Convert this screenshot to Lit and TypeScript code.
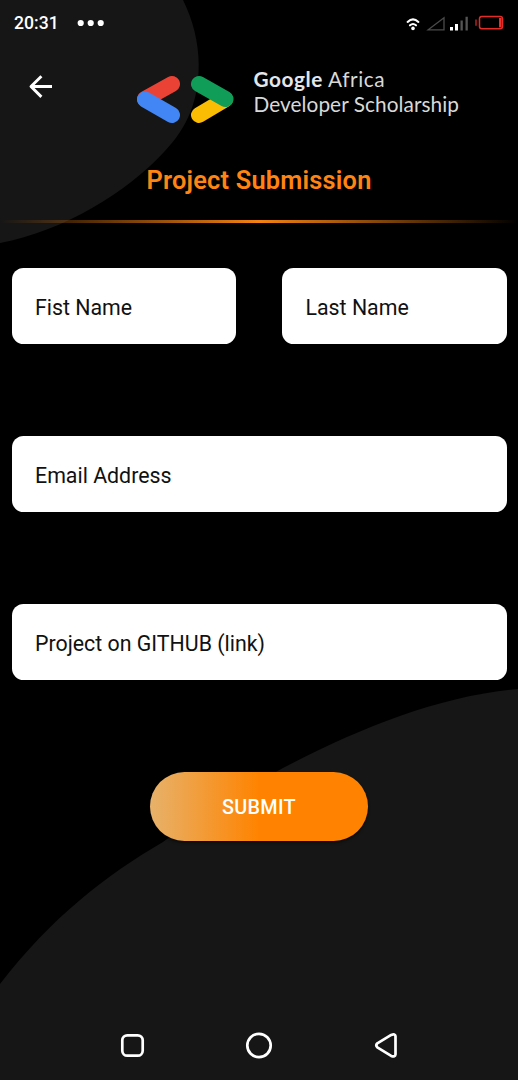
import { LitElement, html, css } from "lit";
import { customElement, property } from "lit/decorators.js";

@customElement("page-backdrop")
class PageBackdrop extends LitElement {
  static styles = css`
    :host { display: block; }
    svg { display: block; width: 100%; height: 100%; }
    path { fill: #161616; }
  `;
  render() {
    return html`<svg viewBox="0 0 518 1080" preserveAspectRatio="none" aria-hidden="true">
      <path d="M0 0H183C193 20 198.700 43 198.700 65C198.700 100 188 127 164 152C127 192 64 231 0 243Z" />
      <path d="M0 984C52 917 105 876 163 842C203 813 242 790 283 768C362 727 440 696 518 689V1080H0Z" />
    </svg>`;
  }
}

@customElement("status-bar")
class StatusBar extends LitElement {
  static styles = css`
    :host { display: flex; align-items: center; height: 46px; padding: 0 14px 0 14px; color: #fff; }
    .time { width: 44px; font-size: 17.600px; font-weight: 500; line-height: 47px; }
    .dots { margin-left: 19px; }
    .system { margin-left: auto; }
    svg { display: block; }
  `;
  render() {
    return html`
      <span class="time">20:31</span>
      <svg class="dots" width="28" height="8" viewBox="0 0 28 8" fill="#fff">
        <circle cx="3.700" cy="4" r="3.100" /><circle cx="13.700" cy="4" r="3.100" /><circle cx="23.700" cy="4" r="3.100" />
      </svg>
      <svg class="system" width="99" height="18" viewBox="0 0 99 18" fill="none">
        <g stroke="#fff" stroke-width="2.100" stroke-linecap="round">
          <path d="M2.600 7.900Q8 2.800 13.400 7.900M5 11.300Q8 8.700 11 11.300" />
        </g>
        <circle cx="8" cy="14.400" r="1.800" fill="#fff" />
        <path d="M23.200 15.800L39 3.800V15.800Z" stroke="#4b4b4b" stroke-width="1.300" />
        <path d="M45 13H48V16.500H45ZM50 10H53V16.500H50Z" fill="#fff" />
        <path d="M55.500 6.500H57.800V16.500H55.500ZM60.500 2.800H62.800V16.500H60.500Z" fill="#555" />
        <rect x="74.500" y="2.600" width="23" height="12.200" rx="2.200" stroke="#e32c26" stroke-width="1.500" />
        <path d="M71 5.500V11.800" stroke="#b22520" stroke-width="1.500" />
        <path d="M95.300 4V13.400" stroke="#f0342d" stroke-width="2.500" />
      </svg>
    `;
  }
}

@customElement("program-logo")
class ProgramLogo extends LitElement {
  static styles = css`
    :host { display: flex; align-items: flex-start; }
    svg { display: block; flex: none; margin-top: 8px; }
    .name { margin-left: 19.500px; font-family: Lato, "Open Sans", sans-serif; font-size: 20.800px; line-height: 25px; color: #d9d9d9; white-space: nowrap; }
    .line { display: block; }
    .first { letter-spacing: 0.550px; margin-top: -1px; }
    .second { letter-spacing: 0.060px; }
    b { font-weight: 700; color: #e6e6e6; }
  `;
  render() {
    return html`
      <svg width="98" height="49" viewBox="0 0 98 49" fill="none" stroke-width="16" stroke-linecap="round">
        <path d="M9 24L36 9" stroke="#ea4335" />
        <path d="M9 24.500L36 40" stroke="#4285f4" />
        <path d="M63 40L89 24.500" stroke="#fbbc04" />
        <path d="M63 9L89.500 24" stroke="#0f9d58" />
      </svg>
      <span class="name">
        <span class="line first"><b>Google</b> Africa</span>
        <span class="line second">Developer Scholarship</span>
      </span>
    `;
  }
}

@customElement("text-field")
class TextField extends LitElement {
  @property() label = "";
  static styles = css`
    :host { display: block; min-width: 0; }
    input {
      display: block; box-sizing: border-box; width: 100%; height: 76px;
      margin: 0; padding: 2px 23.500px 0; border: 0; border-radius: 11.500px;
      background: #fff; color: #111; font: 400 21.350px Roboto, sans-serif; outline: none;
    }
    input::placeholder { color: #111; opacity: 1; }
  `;
  render() {
    return html`<input placeholder=${this.label} aria-label=${this.label} />`;
  }
}

@customElement("nav-bar")
class NavBar extends LitElement {
  static styles = css`
    :host { display: flex; justify-content: space-between; padding: 0 119px 0 119px; height: 28px; }
    svg { display: block; }
  `;
  render() {
    return html`
      <svg width="28" height="28" viewBox="0 0 28 28" fill="none" stroke="#fff" stroke-width="2.700">
        <rect x="3.300" y="3.300" width="20.400" height="20.400" rx="5" />
      </svg>
      <svg width="28" height="28" viewBox="0 0 28 28" fill="none" stroke="#fff" stroke-width="2.700">
        <circle cx="14" cy="13.500" r="11.700" />
      </svg>
      <svg width="28" height="28" viewBox="0 0 28 28" fill="none" stroke="#fff" stroke-width="2.700" stroke-linejoin="round">
        <path d="M6.300 11.300L20.200 2.900Q24.200 1.300 24.500 4.200V22.400Q24.200 25.400 20.200 23.900L6.300 15.400Q4.300 13.300 6.300 11.300Z" />
      </svg>
    `;
  }
}

@customElement("app-root")
class AppRoot extends LitElement {
  static styles = css`
    :host {
      display: flex; flex-direction: column; position: relative; box-sizing: border-box;
      width: 518px; height: 1080px; overflow: hidden; background: #000;
      font-family: Roboto, sans-serif;
    }
    .backdrop { position: absolute; inset: 0; }
    .layer { position: relative; }
    header { display: flex; align-items: flex-start; height: 100px; padding: 21px 0 0 28px; box-sizing: border-box; }
    .back { display: block; margin: 7px 0 0; padding: 0; border: 0; background: none; width: 26px; height: 26px; }
    .back svg { display: block; }
    .logo { margin-left: 82px; }
    h1 { margin: 18px 0 0; height: 33px; line-height: 32px; text-align: center; color: #ff8412; font-size: 25.400px; font-weight: 600; letter-spacing: 0.200px; }
    .rule { margin-top: 22.500px; height: 3px; background: linear-gradient(90deg, rgba(255,132,18,0), #f58213 50%, rgba(255,132,18,0)); }
    form { display: grid; grid-template-columns: 1fr 1fr; column-gap: 46px; row-gap: 92px; margin-top: 45.500px; padding: 0 11.500px; }
    .wide { grid-column: 1 / -1; }
    .submit {
      grid-column: 1 / -1; justify-self: center; width: 218px; height: 69px; padding: 2px 0 0;
      border: 0; border-radius: 35px; color: #fff; font: 500 19.800px Roboto, sans-serif; letter-spacing: 0.300px;
      background: linear-gradient(90deg, #e7b26b, #ff8300 50%); box-shadow: 0 2px 3px rgba(0,0,0,.45);
    }
    .nav { margin-top: auto; margin-bottom: 20px; }
  `;
  render() {
    return html`
      <page-backdrop class="backdrop"></page-backdrop>
      <status-bar class="layer"></status-bar>
      <header class="layer">
        <button class="back" aria-label="Back">
          <svg width="26" height="26" viewBox="0 0 26 26" fill="none" stroke="#fff" stroke-width="2.900" stroke-linejoin="round">
            <path d="M24 12.500H3M13.400 2.200L3 12.500L13.400 22.900" />
          </svg>
        </button>
        <program-logo class="logo"></program-logo>
      </header>
      <h1 class="layer">Project Submission</h1>
      <div class="rule layer"></div>
      <form class="layer">
        <text-field label="Fist Name"></text-field>
        <text-field label="Last Name"></text-field>
        <text-field class="wide" label="Email Address"></text-field>
        <text-field class="wide" label="Project on GITHUB (link)"></text-field>
        <button class="submit" type="button">SUBMIT</button>
      </form>
      <nav-bar class="nav layer"></nav-bar>
    `;
  }
}
